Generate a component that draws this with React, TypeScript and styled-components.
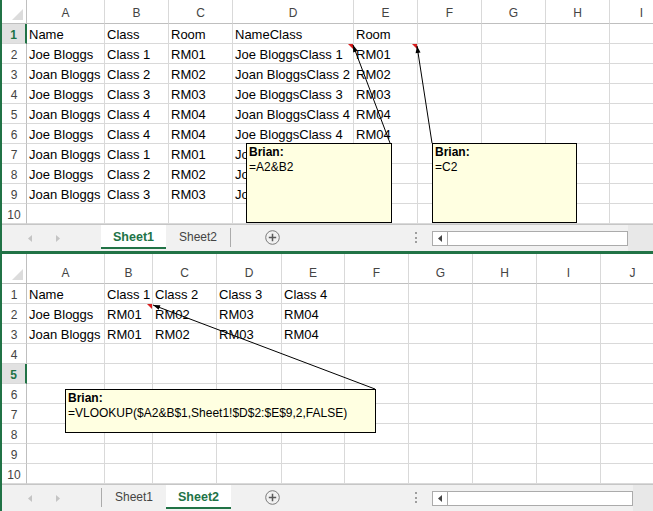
import React from "react";
import styled, { createGlobalStyle, css } from "styled-components";

const GREEN = "#217346";
const GRID = "#d9d9d9";
const HEAD_LINE = "#bfbfbf";

const GlobalStyle = createGlobalStyle`
  html, body { margin: 0; padding: 0; background: #fff; }
  body { font-family: "Liberation Sans", Arial, sans-serif; overflow: hidden; }
  * { box-sizing: border-box; }
`;

const Screen = styled.div`
  width: 653px;
  height: 511px;
  overflow: hidden;
  display: flex;
  flex-direction: column;
`;

const Window = styled.section<{ $last?: boolean }>`
  border-left: 2px solid ${GREEN};
  border-bottom: ${(p) => (p.$last ? "none" : `3px solid ${GREEN}`)};
  display: flex;
  flex-direction: column;
  overflow: hidden;
  flex: 0 0 auto;
`;

const SheetGrid = styled.div<{ $cols: string; $head: number }>`
  position: relative;
  display: grid;
  grid-template-columns: ${(p) => p.$cols};
  grid-template-rows: ${(p) => p.$head}px repeat(10, 20px);
  background: #fff;
`;

const Corner = styled.div`
  border-right: 1px solid ${HEAD_LINE};
  border-bottom: 1px solid ${HEAD_LINE};
  display: flex;
  align-items: flex-end;
  justify-content: flex-end;
  padding: 0 3px 3px 0;
`;

const ColHead = styled.div`
  border-right: 1px solid ${GRID};
  border-bottom: 1px solid ${HEAD_LINE};
  display: flex;
  align-items: flex-end;
  justify-content: center;
  padding-bottom: 3px;
  font-size: 12px;
  line-height: 14px;
  color: #444;
`;

const RowHead = styled.div<{ $active?: boolean }>`
  border-right: 1px solid ${HEAD_LINE};
  border-bottom: 1px solid ${GRID};
  display: flex;
  align-items: flex-end;
  justify-content: center;
  padding-bottom: 1px;
  font-size: 12px;
  line-height: 14px;
  color: #444;
  ${(p) =>
    p.$active &&
    css`
      background: #e1e1e1;
      border-right: 2px solid ${GREEN};
      color: ${GREEN};
      font-weight: bold;
    `}
`;

const Cell = styled.div<{ $note?: boolean }>`
  position: relative;
  border-right: 1px solid ${GRID};
  border-bottom: 1px solid ${GRID};
  display: flex;
  align-items: flex-end;
  padding: 0 0 1px 2px;
  font-size: 13px;
  line-height: 15px;
  color: #000;
  white-space: nowrap;
  overflow: hidden;
  ${(p) =>
    p.$note &&
    css`
      &::after {
        content: "";
        position: absolute;
        top: 0;
        right: 0;
        border-top: 5px solid #d81e1e;
        border-left: 5px solid transparent;
      }
    `}
`;

const Overlay = styled.svg`
  position: absolute;
  left: 0;
  top: 0;
  pointer-events: none;
  overflow: visible;
`;

const Note = styled.div<{ $x: number; $y: number; $w: number; $h: number }>`
  position: absolute;
  left: ${(p) => p.$x}px;
  top: ${(p) => p.$y}px;
  width: ${(p) => p.$w}px;
  height: ${(p) => p.$h}px;
  background: #ffffe1;
  border: 1px solid #000;
  padding: 1px 2px;
  font-size: 12px;
  line-height: 15px;
  color: #000;
  white-space: nowrap;
`;

const Author = styled.div`
  font-weight: bold;
`;

const TabBar = styled.div`
  height: 27px;
  display: flex;
  align-items: flex-start;
  background: #f1f1f1;
  border-top: 1px solid #c6c6c6;
`;

const TabNav = styled.div`
  flex: 0 0 99px;
  height: 26px;
  display: flex;
  align-items: center;
  gap: 24px;
  padding-left: 26px;
`;

const TabList = styled.div`
  flex: 0 0 130px;
  display: flex;
  align-items: flex-start;
`;

const Tab = styled.div<{ $active?: boolean }>`
  flex: 0 0 ${(p) => (p.$active ? 65 : 64)}px;
  height: 24px;
  display: flex;
  align-items: center;
  justify-content: center;
  font-size: 12px;
  color: #444;
  ${(p) =>
    p.$active &&
    css`
      background: #fff;
      border-bottom: 2px solid ${GREEN};
      color: ${GREEN};
      font-weight: bold;
      font-size: 12.5px;
      padding-top: 2px;
    `}
`;

const TabDivider = styled.div`
  flex: 0 0 1px;
  height: 19px;
  margin-top: 3px;
  background: #ababab;
`;

const AddSlot = styled.div`
  flex: 0 0 182px;
  height: 24px;
  display: flex;
  align-items: center;
  padding-left: 34px;
`;

const Splitter = styled.div`
  flex: 0 0 19px;
  display: flex;
  flex-direction: column;
  gap: 2.5px;
  padding: 7px 0 0 2px;
`;

const Dot = styled.span`
  width: 2px;
  height: 2px;
  background: #9e9e9e;
`;

const HScroll = styled.div<{ $width: number }>`
  flex: 0 0 ${(p) => p.$width}px;
  height: 15px;
  margin-top: 6px;
  border: 1px solid #ababab;
  background: #fff;
  display: flex;
`;

const ScrollButton = styled.div`
  flex: 0 0 15px;
  border-right: 1px solid #ababab;
  display: flex;
  align-items: center;
  justify-content: center;
`;

const ScrollRest = styled.div`
  flex: 1;
  height: 26px;
  background: #e8e8e8;
`;

const arrowHead = (x1: number, y1: number, x2: number, y2: number, len = 7, half = 2.5) => {
  const dx = x2 - x1;
  const dy = y2 - y1;
  const d = Math.hypot(dx, dy);
  const ux = dx / d;
  const uy = dy / d;
  const bx = x1 + ux * len;
  const by = y1 + uy * len;
  return `${x1},${y1} ${bx - uy * half},${by + ux * half} ${bx + uy * half},${by - ux * half}`;
};

type Link = { x1: number; y1: number; x2: number; y2: number };

const Arrows: React.FC<{ links: Link[]; height: number }> = ({ links, height }) => (
  <Overlay width={651} height={height}>
    {links.map((l, i) => (
      <g key={i}>
        <line x1={l.x1} y1={l.y1} x2={l.x2} y2={l.y2} stroke="#000" strokeWidth={1} />
        <polygon points={arrowHead(l.x1, l.y1, l.x2, l.y2)} fill="#000" />
      </g>
    ))}
  </Overlay>
);

type GridProps = {
  widths: number[];
  headHeight: number;
  rows: string[][];
  activeRow: number;
  notes: [number, number][];
  children?: React.ReactNode;
};

const Grid: React.FC<GridProps> = ({ widths, headHeight, rows, activeRow, notes, children }) => {
  const letters = "ABCDEFGHIJ".slice(0, widths.length - 1).split("");
  return (
    <SheetGrid $cols={widths.map((w) => `${w}px`).join(" ")} $head={headHeight}>
      <Corner>
        <svg width="11" height="11" viewBox="0 0 11 11">
          <polygon points="0,11 11,11 11,0" fill="#dcdcdc" />
        </svg>
      </Corner>
      {letters.map((l) => (
        <ColHead key={l}>{l}</ColHead>
      ))}
      {Array.from({ length: 10 }, (_, r) => (
        <React.Fragment key={r}>
          <RowHead $active={r + 1 === activeRow}>{r + 1}</RowHead>
          {letters.map((l, c) => (
            <Cell key={l} $note={notes.some(([nr, nc]) => nr === r + 1 && nc === c)}>
              {rows[r]?.[c] ?? ""}
            </Cell>
          ))}
        </React.Fragment>
      ))}
      {children}
    </SheetGrid>
  );
};

const SheetTabs: React.FC<{ active: 1 | 2; scrollWidth: number }> = ({ active, scrollWidth }) => (
  <TabBar>
    <TabNav>
      <svg width="4" height="7" viewBox="0 0 4 7">
        <polygon points="4,0 0,3.5 4,7" fill="#c4c4c4" />
      </svg>
      <svg width="4" height="7" viewBox="0 0 4 7">
        <polygon points="0,0 4,3.5 0,7" fill="#c4c4c4" />
      </svg>
    </TabNav>
    <TabList>
      {active === 2 && <TabDivider />}
      <Tab $active={active === 1}>Sheet1</Tab>
      <Tab $active={active === 2}>Sheet2</Tab>
      {active === 1 && <TabDivider />}
    </TabList>
    <AddSlot>
      <svg width="15" height="15" viewBox="0 0 15 15">
        <circle cx="7.5" cy="7.5" r="6.8" fill="none" stroke="#7a7a7a" strokeWidth="1" />
        <path d="M7.5 3.8v7.4M3.8 7.5h7.4" stroke="#5a5a5a" strokeWidth="1.5" />
      </svg>
    </AddSlot>
    <Splitter>
      <Dot />
      <Dot />
      <Dot />
    </Splitter>
    <HScroll $width={scrollWidth}>
      <ScrollButton>
        <svg width="4" height="7" viewBox="0 0 4 7">
          <polygon points="4,0 0,3.5 4,7" fill="#444" />
        </svg>
      </ScrollButton>
    </HScroll>
    <ScrollRest />
  </TabBar>
);

const sheet1Rows = [
  ["Name", "Class", "Room", "NameClass", "Room"],
  ["Joe Bloggs", "Class 1", "RM01", "Joe BloggsClass 1", "RM01"],
  ["Joan Bloggs", "Class 2", "RM02", "Joan BloggsClass 2", "RM02"],
  ["Joe Bloggs", "Class 3", "RM03", "Joe BloggsClass 3", "RM03"],
  ["Joan Bloggs", "Class 4", "RM04", "Joan BloggsClass 4", "RM04"],
  ["Joe Bloggs", "Class 4", "RM04", "Joe BloggsClass 4", "RM04"],
  ["Joan Bloggs", "Class 1", "RM01", "Joan BloggsClass 1", "RM01"],
  ["Joe Bloggs", "Class 2", "RM02", "Joe BloggsClass 2", "RM02"],
  ["Joan Bloggs", "Class 3", "RM03", "Joan BloggsClass 3", "RM03"],
];

const sheet2Rows = [
  ["Name", "Class 1", "Class 2", "Class 3", "Class 4"],
  ["Joe Bloggs", "RM01", "RM02", "RM03", "RM04"],
  ["Joan Bloggs", "RM01", "RM02", "RM03", "RM04"],
];

const App: React.FC = () => (
  <Screen>
    <GlobalStyle />
    <Window>
      <Grid
        widths={[25, 78, 64, 64, 121, 64, 64, 64, 64, 64]}
        headHeight={24}
        rows={sheet1Rows}
        activeRow={1}
        notes={[
          [2, 3],
          [2, 4],
        ]}
      >
        <Arrows
          height={224}
          links={[
            { x1: 351, y1: 45, x2: 388, y2: 143 },
            { x1: 415, y1: 46, x2: 430, y2: 143 },
          ]}
        />
        <Note $x={244} $y={143} $w={146} $h={80}>
          <Author>Brian:</Author>
          =A2&amp;B2
        </Note>
        <Note $x={430} $y={143} $w={145} $h={80}>
          <Author>Brian:</Author>
          =C2
        </Note>
      </Grid>
      <SheetTabs active={1} scrollWidth={196} />
    </Window>
    <Window $last>
      <Grid
        widths={[25, 78, 48, 64, 65, 63, 64, 64, 64, 64, 64]}
        headHeight={30}
        rows={sheet2Rows}
        activeRow={5}
        notes={[[2, 1]]}
      >
        <Arrows height={230} links={[{ x1: 151, y1: 51, x2: 373, y2: 135 }]} />
        <Note $x={63} $y={135} $w={311} $h={44}>
          <Author>Brian:</Author>
          =VLOOKUP($A2&amp;B$1,Sheet1!$D$2:$E$9,2,FALSE)
        </Note>
      </Grid>
      <SheetTabs active={2} scrollWidth={201} />
    </Window>
  </Screen>
);

export default App;
